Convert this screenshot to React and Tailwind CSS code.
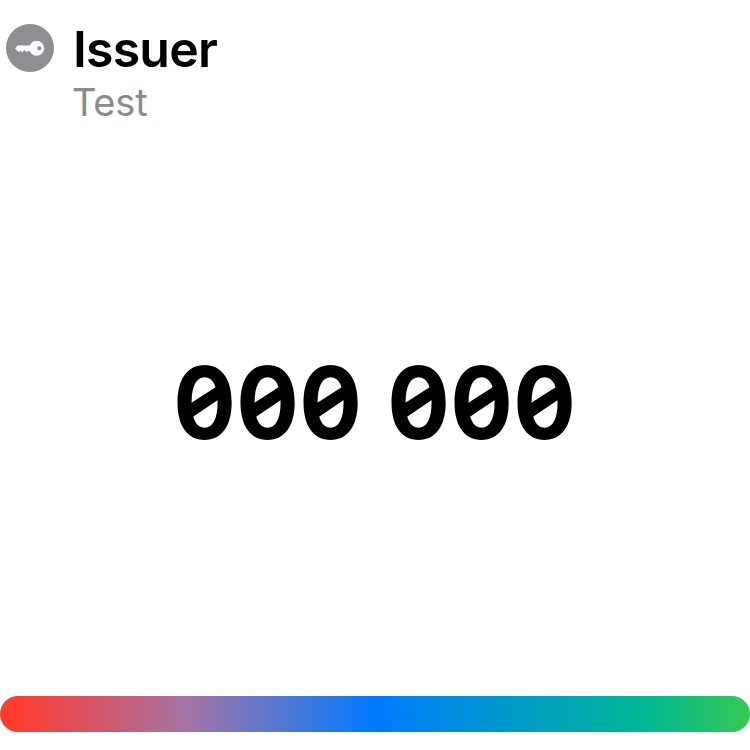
const groups = ["000", "000"];

function KeyBadge() {
  return (
    <svg className="size-12 shrink-0" viewBox="0 0 48 48" aria-hidden="true">
      <circle cx="24" cy="24" r="24" fill="#8e8e93" />
      <path
        fill="#fff"
        d="M12.2 21.4H24v5.9h-2l-1.3.6q-.4.1-.7-.2l-1.6-1.6-1.8 1.9q-.4.4-.8 0l-1.3-1.3-1.2 1q-.4.3-.8 0L9.4 24.9q-.4-.4 0-.8l2.1-2.4q.3-.3.7-.3Z"
      />
      <circle cx="30.6" cy="24.3" r="7.5" fill="#fff" />
      <circle cx="33.3" cy="24.3" r="2.1" fill="#8e8e93" />
    </svg>
  );
}

// A zero crossed by a shallow diagonal bar inside its bowl.
function Digit({ value }) {
  return (
    <span className="relative flex h-[100px] w-[63px] justify-center">
      <span className="scale-x-[0.93]">{value}</span>
      {value === "0" && (
        <span className="absolute top-[31px] left-[14px] h-[37px] w-[34px] bg-black [clip-path:polygon(0_59%,100%_0,100%_38%,0_100%)]" />
      )}
    </span>
  );
}

export default function App() {
  return (
    <main className="flex h-[750px] w-[750px] flex-col overflow-hidden bg-white font-['Inter',sans-serif]">
      <header className="flex h-[130px] gap-[19px] pt-6 pl-1.5">
        <KeyBadge />
        <div className="flex flex-col">
          <h1 className="h-[58px] text-[50px] leading-[50px] font-semibold tracking-[-0.8px] text-black">Issuer</h1>
          <p className="-ml-px text-[38px] leading-[40px] tracking-[-0.2px] text-[#8a8a8e]">Test</p>
        </div>
      </header>
      <div className="flex h-[542px] justify-center gap-[25px] pt-[222px]">
        {groups.map((group, i) => (
          <div key={i} className="flex translate-y-[0.5px] text-[100px] leading-[100px] font-bold text-black">
            {group.split("").map((digit, j) => (
              <Digit key={j} value={digit} />
            ))}
          </div>
        ))}
      </div>
      <div className="mt-6 h-9 w-full shrink-0 rounded-full bg-[linear-gradient(90deg,#ff3b30_2%,#a574a6_25%,#007aff_50%,#00b894_86%,#34c759_99%)]" />
    </main>
  );
}
